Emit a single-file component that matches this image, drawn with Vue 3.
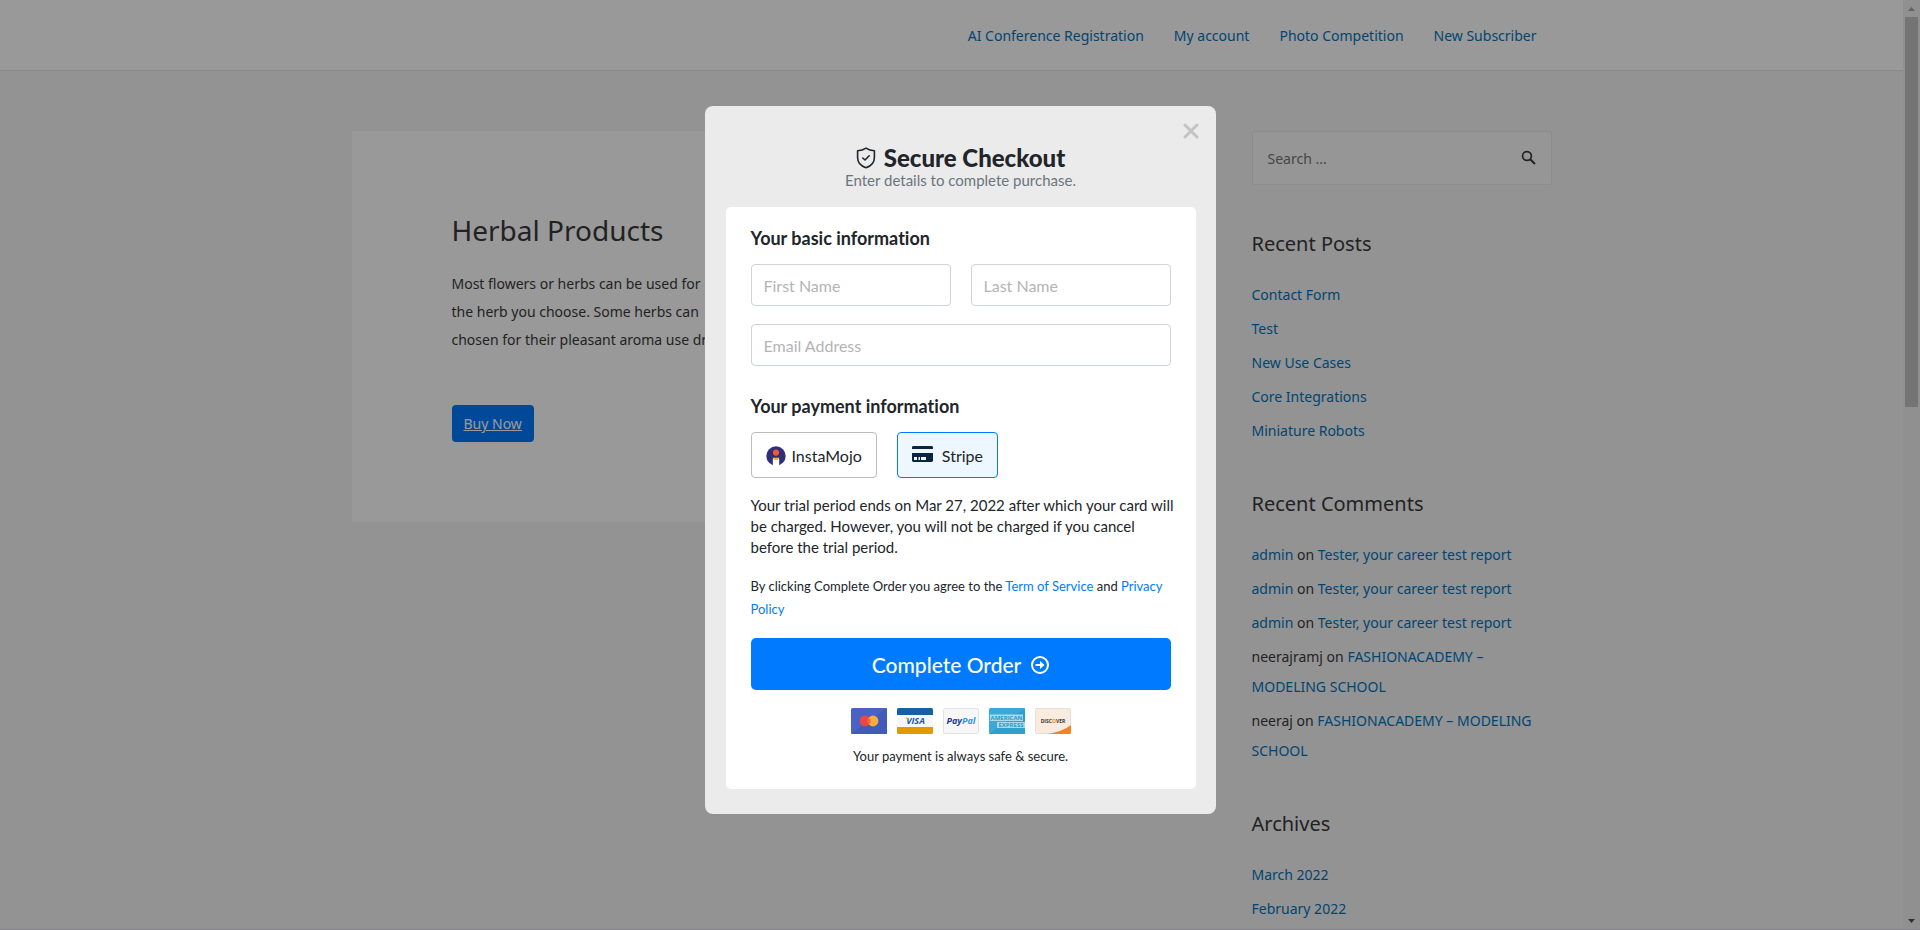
<template>
  <div class="page">
    <header class="siteHeader">
      <nav class="container mainNav">
        <a v-for="item in navItems" :key="item" href="#">{{ item }}</a>
      </nav>
    </header>

    <div class="container content">
      <main>
        <article>
          <h1>Herbal Products</h1>
          <p>
            Most flowers or herbs can be used for<br>
            the herb you choose. Some herbs can<br>
            chosen for their pleasant aroma use dr
          </p>
          <a class="buyNow" href="#">Buy Now</a>
        </article>
      </main>

      <aside>
        <form class="search" @submit.prevent>
          <input v-model="query" type="search" placeholder="Search ..." aria-label="Search">
          <button type="submit" aria-label="Submit search">
            <svg width="16" height="16" viewBox="0 0 16 16" fill="none" stroke="#3a3a3a" stroke-width="1.7">
              <circle cx="6" cy="6" r="4.4" />
              <path d="M9.2 9.2L14 14" stroke-width="2" />
            </svg>
          </button>
        </form>

        <section>
          <h2>Recent Posts</h2>
          <ul>
            <li v-for="post in posts" :key="post"><a href="#">{{ post }}</a></li>
          </ul>
        </section>

        <section>
          <h2>Recent Comments</h2>
          <ul>
            <li v-for="(c, idx) in comments" :key="idx">
              <a v-if="c.linked" href="#">{{ c.author }}</a><span v-else>{{ c.author }}</span>
              on <a href="#">{{ c.post }}</a>
            </li>
          </ul>
        </section>

        <section>
          <h2>Archives</h2>
          <ul>
            <li v-for="month in archives" :key="month"><a href="#">{{ month }}</a></li>
          </ul>
        </section>
      </aside>
    </div>

    <div class="scrollbar" aria-hidden="true">
      <svg width="7" height="4" viewBox="0 0 7 4"><path d="M3.5 0L7 4H0z" fill="#a3a3a3" /></svg>
      <div class="track"><div class="thumb"></div></div>
      <svg width="7" height="4" viewBox="0 0 7 4"><path d="M0 0H7L3.5 4z" fill="#505050" /></svg>
    </div>
  </div>

  <div class="overlay">
    <div class="modal" role="dialog" aria-labelledby="checkoutTitle">
      <button class="close" type="button" aria-label="Close">
        <svg width="16" height="16" viewBox="0 0 16 16" stroke="#c4c4c4" stroke-width="3" stroke-linecap="round">
          <path d="M2 2L14 14M14 2L2 14" />
        </svg>
      </button>

      <div class="modalHead">
        <h3 id="checkoutTitle">
          <svg width="20" height="22" viewBox="0 0 20 22" fill="none" stroke="#212529" stroke-width="1.6" stroke-linecap="round" stroke-linejoin="round">
            <path d="M10 1.2C7.6 2.8 4.8 3.6 1.6 3.8V10.5C1.6 15.4 4.8 19 10 20.8C15.2 19 18.4 15.4 18.4 10.5V3.8C15.2 3.6 12.4 2.8 10 1.2z" />
            <path d="M6.8 11L9 13L13.2 8.8" />
          </svg>
          Secure Checkout
        </h3>
        <p>Enter details to complete purchase.</p>
      </div>

      <form class="card" @submit.prevent>
        <h4>Your basic information</h4>
        <div class="fields">
          <input v-model="firstName" type="text" placeholder="First Name" aria-label="First Name">
          <input v-model="lastName" type="text" placeholder="Last Name" aria-label="Last Name">
          <input v-model="email" class="wide" type="email" placeholder="Email Address" aria-label="Email Address">
        </div>

        <h4>Your payment information</h4>
        <div class="gateways">
          <button type="button" :class="{ selected: gateway == 'instamojo' }" @click="gateway = 'instamojo'">
            <svg width="20" height="22" viewBox="0 0 20 22">
              <circle cx="10" cy="12" r="9.7" fill="#2f2d7c" />
              <path d="M6.8 22V14.6H13.2V22z" fill="#fff" />
              <path d="M6.8 13.400H13.2C13.2 15.4 11.8 16 10 16S6.8 15.4 6.8 13.400z" fill="#fbb034" />
              <path d="M6.8 12H13.2V13.4H6.8z" fill="#2f2d7c" />
              <circle cx="10" cy="8.6" r="3.1" fill="#f05a28" />
            </svg>
            InstaMojo
          </button>
          <button type="button" class="stripe" :class="{ selected: gateway == 'stripe' }" @click="gateway = 'stripe'">
            <svg width="21" height="22" viewBox="0 0 21 22">
              <path d="M0 5V3.200Q0 2 1.4 2H19.6Q21 2 21 3.2V5z" fill="#0a2540" />
              <path d="M0 9H21V16.6Q21 18 19.6 18H1.4Q0 18 0 16.6z" fill="#0a2540" />
              <path d="M2 13H5V16H2zM6.5 13H8V16H6.5zM9 13H14V16H9z" fill="#eef6ff" />
            </svg>
            Stripe
          </button>
        </div>

        <p class="trial">
          Your trial period ends on Mar 27, 2022 after which your card will be charged. However, you will not be charged if you cancel before the trial period.
        </p>
        <p class="terms">
          By clicking Complete Order you agree to the <a href="#">Term of Service</a> and <a href="#">Privacy Policy</a>
        </p>

        <button class="order" type="submit">
          Complete Order
          <svg width="18" height="20" viewBox="0 0 18 20" fill="none" stroke="#fff" stroke-width="2">
            <circle cx="9" cy="11" r="8" />
            <path d="M4.5 11H11" />
            <path d="M9 7L13.5 11L9 15z" fill="#fff" stroke="none" />
          </svg>
        </button>

        <div class="brands">
          <svg viewBox="0 0 36 26" role="img" aria-label="Mastercard">
            <rect width="36" height="26" rx="1.5" fill="#4a62c4" />
            <path d="M36 0V26H0z" fill="#425bb9" />
            <circle cx="14" cy="13" r="5.4" fill="#ee4444" />
            <circle cx="22" cy="13" r="5.4" fill="#fbac3a" />
            <path d="M18 9.4A5.4 5.4 0 0 1 18 16.6A5.4 5.4 0 0 1 18 9.4z" fill="#f0693c" />
          </svg>
          <svg viewBox="0 0 36 26" role="img" aria-label="Visa">
            <rect width="36" height="26" rx="1.5" fill="#f7f7f7" />
            <path d="M0 7V1.5Q0 0 1.5 0H34.5Q36 0 36 1.5V7z" fill="#1860a4" />
            <path d="M0 19H36V24.5Q36 26 34.5 26H1.5Q0 26 0 24.5z" fill="#e49804" />
            <text x="18.5" y="16.4" font-size="9" font-weight="700" font-style="italic" fill="#1860a4">VISA</text>
            <path d="M8 9.8H10.6L11 12.4Q10 10.6 8 9.8z" fill="#e49804" />
          </svg>
          <svg viewBox="0 0 36 26" role="img" aria-label="PayPal">
            <rect x=".5" y=".5" width="35" height="25" rx="1.5" fill="#f7f7f7" stroke="#e2e2e2" />
            <text x="18" y="16" font-size="9" font-weight="700" font-style="italic" fill="#22408f">Pay<tspan fill="#2f9bdc">Pal</tspan></text>
          </svg>
          <svg viewBox="0 0 36 26" role="img" aria-label="American Express">
            <rect width="36" height="26" rx="1.5" fill="#3aa8d8" />
            <path d="M36 0V26H0z" fill="#2f9fd0" />
            <path d="M1 6.5H34V13H1zM8 14H36V20H8z" fill="#a9dbf0" />
            <text x="17.5" y="12" font-size="6" font-weight="700" fill="#2b98ca">AMERICAN</text>
            <text x="22" y="19.2" font-size="6" font-weight="700" fill="#2b98ca">EXPRESS</text>
          </svg>
          <svg viewBox="0 0 36 26" role="img" aria-label="Discover">
            <rect x=".5" y=".5" width="35" height="25" rx="1.5" fill="#f9ecdf" stroke="#e6dfd8" />
            <path d="M36 17V24.5Q36 26 34.5 26H12Q28 23.5 36 17z" fill="#f58220" />
            <text x="18" y="15" font-size="5" font-weight="700" fill="#3b3230">DISC<tspan fill="#f58220">O</tspan>VER</text>
          </svg>
        </div>
        <p class="safe">Your payment is always safe &amp; secure.</p>
      </form>
    </div>
  </div>
</template>

<script setup>
import { ref } from 'vue'

const query = ref('')
const firstName = ref('')
const lastName = ref('')
const email = ref('')
const gateway = ref('stripe')

const navItems = ['AI Conference Registration', 'My account', 'Photo Competition', 'New Subscriber']

const posts = ['Contact Form', 'Test', 'New Use Cases', 'Core Integrations', 'Miniature Robots']

const comments = [
  { author: 'admin', linked: true, post: 'Tester, your career test report' },
  { author: 'admin', linked: true, post: 'Tester, your career test report' },
  { author: 'admin', linked: true, post: 'Tester, your career test report' },
  { author: 'neerajramj', linked: false, post: 'FASHIONACADEMY – MODELING SCHOOL' },
  { author: 'neeraj', linked: false, post: 'FASHIONACADEMY – MODELING SCHOOL' }
]

const archives = ['March 2022', 'February 2022']
</script>

<style>
body {
  margin: 0;
  overflow: hidden;
}
</style>

<style scoped>
* {
  box-sizing: border-box;
}
h1, h2, h3, h4, p, ul {
  margin: 0;
  padding: 0;
  font-weight: 400;
}
ul {
  list-style: none;
}
a {
  color: #0274be;
  text-decoration: none;
}
input, button {
  font-family: inherit;
}
button {
  cursor: pointer;
}
.page {
  position: relative;
  height: 100vh;
  overflow: hidden;
  padding-right: 17px;
  background: #f5f5f5;
  border-bottom: 1px solid #dcdce6;
  font-family: "Segoe UI", "Noto Sans", sans-serif;
  font-size: 14px;
  color: #3a3a3a;
}
.container {
  max-width: 1200px;
  margin: 0 auto;
}
.siteHeader {
  padding-top: 2px;
  background: #fff;
  border-bottom: 1px solid #e6e6e6;
}
.mainNav {
  display: flex;
  justify-content: flex-end;
  gap: 30px;
  padding-right: 15px;
  line-height: 68px;
}
.content {
  display: flex;
  gap: 60px;
  padding-top: 60px;
}
main {
  flex: 1;
  min-width: 0;
}
article {
  padding: 80px 100px;
  background: #fff;
}
article h1 {
  margin-bottom: 20px;
  font-size: 28px;
  line-height: 39px;
  color: #3a3a3a;
}
article p {
  margin-bottom: 51px;
  line-height: 28px;
}
.buyNow {
  display: block;
  width: fit-content;
  padding: 0 12px;
  border-radius: 4px;
  background: #007bff;
  color: #fff;
  line-height: 37px;
  text-decoration: underline;
}
aside {
  width: 300px;
  flex-shrink: 0;
}
.search {
  display: flex;
  align-items: center;
  height: 54px;
  margin-bottom: 40px;
  border: 1px solid #eaeaea;
  border-radius: 2px;
  background: #fafafa;
}
.search input {
  flex: 1;
  min-width: 0;
  padding: 0 0 0 15px;
  border: 0;
  background: none;
  font-size: 14px;
  outline: none;
}
.search input::placeholder {
  color: #757575;
}
.search button {
  height: 16px;
  margin-right: 14px;
  padding: 0;
  border: 0;
  background: none;
}
aside section {
  margin-bottom: 39px;
}
aside h2 {
  margin-bottom: 17px;
  font-size: 20px;
  line-height: 38px;
}
aside li {
  margin-bottom: 4px;
  line-height: 30px;
}

.scrollbar {
  position: absolute;
  top: 0;
  right: 0;
  bottom: 0;
  width: 17px;
  display: flex;
  flex-direction: column;
  align-items: center;
  padding: 7px 0 6px;
  background: #f1f1f1;
}
.track {
  flex: 1;
  width: 13px;
  padding: 6px 0;
}
.thumb {
  height: 43.5%;
  background: #c1c1c1;
}

.overlay {
  position: fixed;
  inset: 0;
  display: flex;
  justify-content: center;
  align-items: flex-start;
  padding-top: 106px;
  background: rgba(0, 0, 0, 0.4);
  font-family: "Avenir Next", Lato, sans-serif;
  font-variant-ligatures: no-common-ligatures;
  color: #212529;
}
.modal {
  position: relative;
  width: 100%;
  max-width: 511px;
  padding: 37px 20px 25px 21px;
  border-radius: 8px;
  background: #ebebeb;
}
.close {
  position: absolute;
  top: 17px;
  right: 17px;
  height: 16px;
  padding: 0;
  border: 0;
  background: none;
}
.close svg, .search svg {
  display: block;
}
.modalHead {
  margin-bottom: 19px;
  text-align: center;
}
.modalHead h3 {
  display: flex;
  justify-content: center;
  align-items: center;
  gap: 8px;
  font-size: 24px;
  font-weight: 900;
  line-height: 30px;
}
.modalHead p {
  font-size: 15px;
  line-height: 15px;
  color: #6c757d;
}
.card {
  padding: 20px 25px;
  border-radius: 5px;
  background: #fff;
}
.card h4 {
  margin-bottom: 14px;
  font-size: 18px;
  font-weight: 700;
  line-height: 23px;
}
.fields {
  display: grid;
  grid-template-columns: 1fr 1fr;
  gap: 18px 20px;
  margin-bottom: 29px;
}
.fields input {
  width: 100%;
  height: 42px;
  padding: 0 12px;
  border: 1px solid #ced4da;
  border-radius: 4px;
  font-size: 16px;
  color: #212529;
}
.fields input::placeholder {
  color: #b4b4b4;
}
.wide {
  grid-column: 1 / 3;
}
.gateways {
  display: flex;
  gap: 20px;
  margin-bottom: 17px;
}
.gateways button {
  display: flex;
  align-items: center;
  gap: 6px;
  height: 46px;
  padding: 0 14px;
  border: 1px solid #bcbcbc;
  border-radius: 4px;
  background: #fff;
  color: #212529;
  font-size: 16px;
}
.gateways .stripe {
  gap: 9px;
}
.gateways .selected {
  border-color: #007bff;
  background: #eef6ff;
}
.trial {
  margin-right: -5px;
  margin-bottom: 17px;
  font-size: 15px;
  line-height: 21px;
}
.terms {
  margin-bottom: 17px;
  font-size: 13px;
  line-height: 23px;
}
.terms a {
  color: #007bff;
}
.order {
  display: flex;
  justify-content: center;
  align-items: center;
  gap: 10px;
  width: 100%;
  height: 52px;
  border: 0;
  border-radius: 5px;
  background: #007bff;
  color: #fff;
  font-size: 21px;
  font-weight: 500;
}
.brands {
  display: flex;
  justify-content: center;
  gap: 10px;
  margin: 18px 0 12px;
}
.brands svg {
  width: 36px;
  height: 26px;
}
.brands text {
  font-family: "Open Sans", sans-serif;
  text-anchor: middle;
}
.safe {
  padding-bottom: 3px;
  font-size: 13px;
  line-height: 20px;
  text-align: center;
}
</style>
